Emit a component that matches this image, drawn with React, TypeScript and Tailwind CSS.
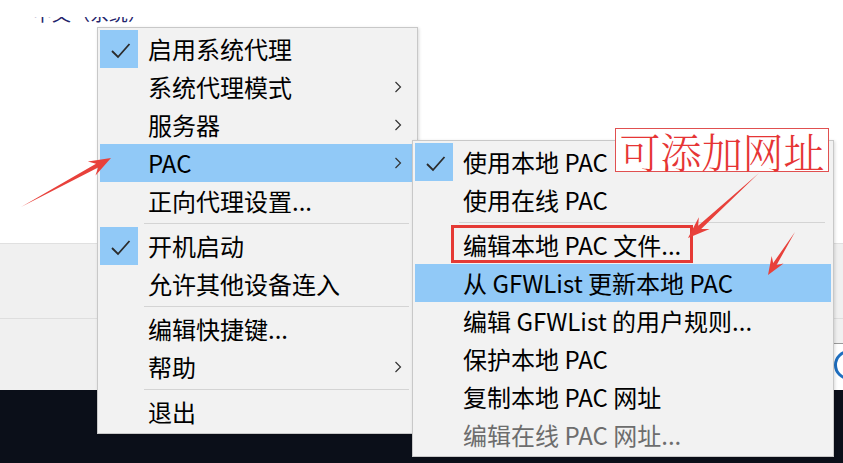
import React from "react";

type Item =
  | "sep"
  | { label: string; checked?: boolean; sub?: boolean; active?: boolean; disabled?: boolean };

const mainItems: Item[] = [
  { label: "启用系统代理", checked: true },
  { label: "系统代理模式", sub: true },
  { label: "服务器", sub: true },
  { label: "PAC", sub: true, active: true },
  { label: "正向代理设置..." },
  "sep",
  { label: "开机启动", checked: true },
  { label: "允许其他设备连入" },
  "sep",
  { label: "编辑快捷键..." },
  { label: "帮助", sub: true },
  "sep",
  { label: "退出" },
];

const subItems: Item[] = [
  { label: "使用本地 PAC", checked: true },
  { label: "使用在线 PAC" },
  "sep",
  { label: "编辑本地 PAC 文件..." },
  { label: "从 GFWList 更新本地 PAC", active: true },
  { label: "编辑 GFWList 的用户规则..." },
  { label: "保护本地 PAC" },
  { label: "复制本地 PAC 网址" },
  { label: "编辑在线 PAC 网址...", disabled: true },
];

function Check() {
  return (
    <svg width="38" height="38" viewBox="0 0 38 38">
      <polyline points="12,21 18,27 29.5,14" fill="none" stroke="#2b2b2b" strokeWidth="1.8" strokeLinejoin="miter" />
    </svg>
  );
}

function Chevron() {
  return (
    <svg width="8" height="12" viewBox="0 0 8 12" className="mr-[13px] shrink-0">
      <polyline points="1.5,1 6.5,6 1.5,11" fill="none" stroke="#333" strokeWidth="1.2" />
    </svg>
  );
}

function MenuList({ items }: { items: Item[] }) {
  return (
    <>
      {items.map((it, i) =>
        it === "sep" ? (
          <div key={i} className="flex h-[7px] items-center">
            <div className="ml-[44px] mr-[6px] h-px flex-1 bg-[#d4d4d4]" />
          </div>
        ) : (
          <div key={i} className={`flex h-[38px] items-center ${it.active ? "bg-[#91c9f7]" : ""}`}>
            <div className={`flex h-full w-[38px] shrink-0 items-center justify-center ${it.checked ? "bg-[#91c9f7]" : ""}`}>
              {it.checked && <Check />}
            </div>
            <span
              className={`ml-[10px] flex-1 whitespace-nowrap text-[24px] leading-none ${it.disabled ? "text-[#6d6d6d]" : "text-black"}`}
            >
              {it.label}
            </span>
            {it.sub && <Chevron />}
          </div>
        )
      )}
    </>
  );
}

function arrow(tx: number, ty: number, px: number, py: number, headLen: number, headW: number, shaftW: number) {
  const dx = px - tx;
  const dy = py - ty;
  const L = Math.hypot(dx, dy);
  const ux = dx / L;
  const uy = dy / L;
  const nx = -uy;
  const ny = ux;
  const hx = px - ux * headLen * 0.72;
  const hy = py - uy * headLen * 0.72;
  const bx = px - ux * headLen;
  const by = py - uy * headLen;
  const pts = [
    [tx, ty],
    [hx + nx * shaftW, hy + ny * shaftW],
    [bx + nx * headW, by + ny * headW],
    [px, py],
    [bx - nx * headW, by - ny * headW],
    [hx - nx * shaftW, hy - ny * shaftW],
  ];
  return pts.map((p) => p.join(",")).join(" ");
}

export default function App() {
  return (
    <div
      className="relative h-[463px] w-[843px] overflow-hidden bg-white"
      style={{ fontFamily: '"Noto Sans CJK SC", "Noto Sans", sans-serif' }}
    >
      {/* background */}
      <div className="flex h-full flex-col">
        <div className="h-[243px] pt-[17px]">
          <div className="ml-[33px] h-[6px] overflow-hidden">
            <div className="-mt-[14px] text-[19px] leading-[20px] text-[#23236b]">中文（系统）</div>
          </div>
        </div>
        <div className="h-[75px] border-t border-[#e0e0e0] bg-[#f0f0f0]" />
        <div className="flex h-[72px] border-t border-[#dedede] bg-[#f0f0f0]">
          <div className="flex-1" />
          <div className="flex w-[9px] flex-col">
            <div className="h-[24px]" />
            <div className="flex-1 border-t border-[#9a9a9a] bg-white pt-[6px]">
              <div className="h-[30px] w-[30px] rounded-full border-[3px] border-[#1f6fc0]" />
            </div>
          </div>
        </div>
        <div className="flex-1 bg-[#0b0f19]" />
      </div>

      {/* main menu */}
      <div className="absolute left-[97px] top-[27px] w-[321px] border border-[#c8c8c8] bg-[#f2f2f2] p-[2px] shadow-[1px_1px_3px_rgba(0,0,0,0.15)]">
        <MenuList items={mainItems} />
      </div>

      {/* submenu */}
      <div className="absolute left-[412px] top-[140px] w-[422px] border border-[#c8c8c8] bg-[#f2f2f2] p-[2px] shadow-[1px_1px_3px_rgba(0,0,0,0.15)]">
        <MenuList items={subItems} />
      </div>

      {/* annotation label */}
      <div className="absolute left-[615px] top-[128px] flex h-[44px] w-[214px] items-center justify-center border border-[#e05050] bg-white">
        <span
          className="whitespace-nowrap text-[41px] leading-none text-[#e63535]"
          style={{ fontFamily: '"Noto Serif CJK SC", "Noto Sans CJK SC", serif', fontWeight: 300 }}
        >
          可添加网址
        </span>
      </div>

      {/* arrows and box */}
      <svg className="pointer-events-none absolute left-0 top-0" width="843" height="463" viewBox="0 0 843 463">
        <rect x="452.5" y="226.5" width="239" height="35" fill="none" stroke="#e53a35" strokeWidth="3" />
        <polygon points={arrow(21, 207, 111, 158, 22, 8, 2.2)} fill="#e8413b" />
        <polygon points={arrow(759, 173, 688, 238, 22, 8, 2.2)} fill="#e8413b" />
        <polygon points={arrow(795, 232, 768, 275, 18, 7, 2)} fill="#e8413b" />
      </svg>
    </div>
  );
}
